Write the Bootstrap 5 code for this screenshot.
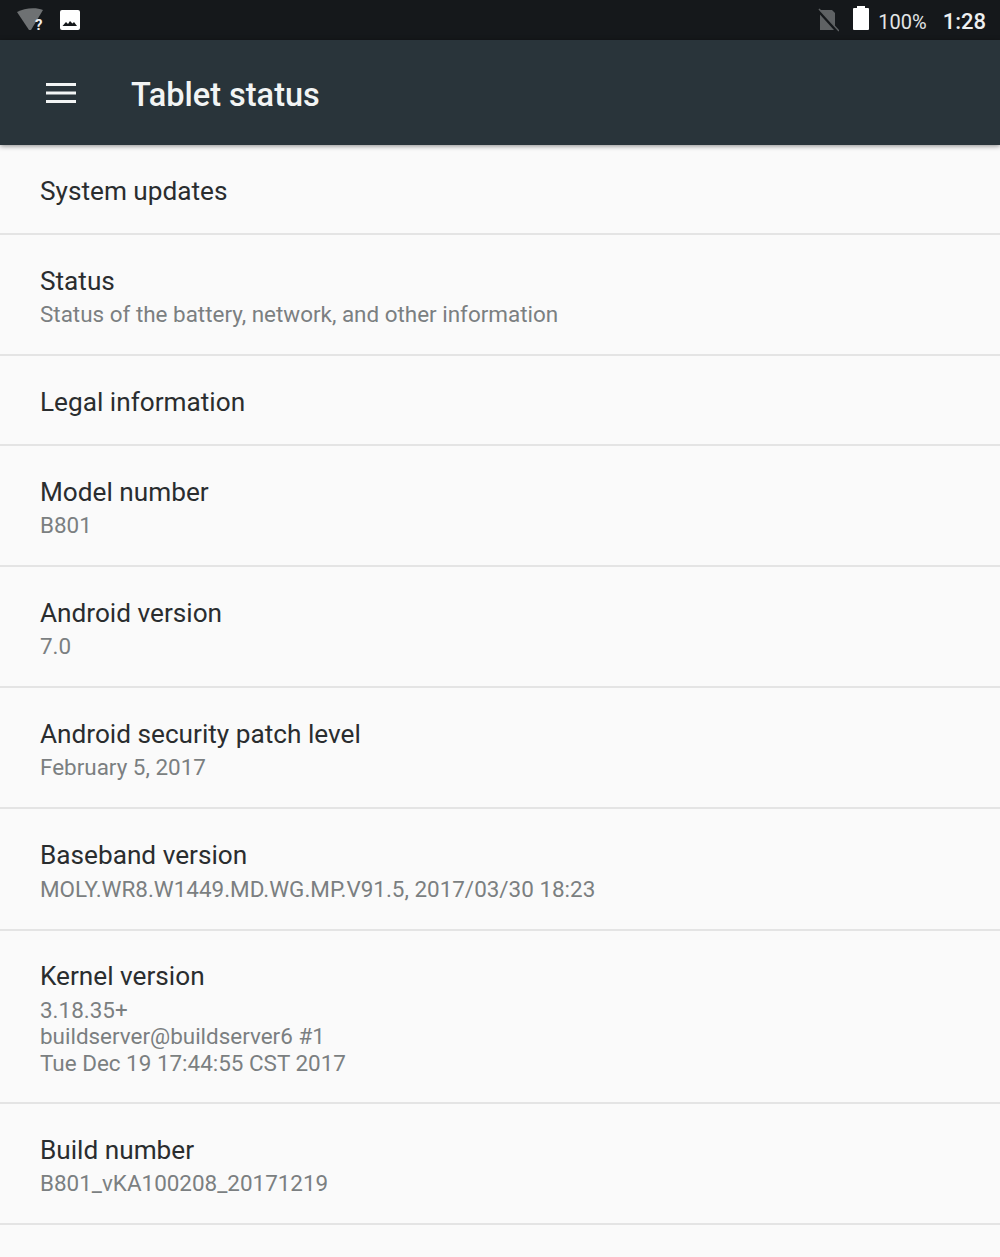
<!DOCTYPE html>
<html lang="en">
<head>
<meta charset="utf-8">
<title>Tablet status</title>
<link href="https://cdn.jsdelivr.net/npm/bootstrap@5.3.0/dist/css/bootstrap.min.css" rel="stylesheet">
<style>
html,body{height:100%}
body{background:#fafafa;font-family:Roboto,"Liberation Sans",sans-serif;overflow:hidden}
.sbar{height:40px;background:#15181b;padding:0 14px 0 16px;color:#eceeef}
.sbar svg{display:block}
.wifi{margin-right:14px}
.pct{font-size:20px;line-height:1;color:#e3e5e6;margin:3px 0 0 9px}
.clock{font-size:22px;line-height:1;font-weight:500;color:#eef0f1;margin:4px 0 0 16px}
.simoff{margin-right:14px}
.batt{margin-bottom:4px}
.abar{height:105px;background:#29343a;box-shadow:0 1px 5px rgba(0,0,0,.45);position:relative;z-index:2;padding-left:46px}
.atitle{font-size:32.5px;font-weight:500;color:#f2f4f4;margin:5px 0 0 55px;line-height:1}
.list-group-flush>.prow,.list-group-flush>.prow:last-child{border-width:0 0 2px;border-style:solid;border-color:#e4e4e4;border-radius:0;background:#fafafa;padding:3.5px 40px 0;height:121px;display:flex;flex-direction:column;justify-content:center}
.list-group-flush>.prow.one{height:90px;padding-top:4px}
.list-group-flush>.prow.wide{height:122px}
.list-group-flush>.prow.three{height:173px}
.ptitle{font-size:26.2px;line-height:32px;color:#2a2d2f}
.psub{font-size:22.45px;line-height:26.4px;color:#7b7f81;margin-top:4.5px}
</style>
</head>
<body>
<div class="sbar d-flex align-items-center">
<svg class="wifi" width="29" height="26" viewBox="0 0 29 26"><path d="M1 5C8 1 20 0 27 3L15 23h-2z" fill="#6e7173"/><text x="19" y="23" font-family="Roboto" font-size="15" font-weight="700" fill="#eee">?</text></svg>
<svg width="22" height="22" viewBox="0 0 22 22"><rect x="1" y="1" width="20" height="20" rx="2" fill="#fff"/><path d="M3.500 17l3.500-4 2 2 2-3 2.500 2.500 1.500-1.500 3 4z" fill="#15181b"/></svg>
<div class="ms-auto d-flex align-items-center">
<svg class="simoff" width="22" height="24" viewBox="0 0 22 24"><path d="M3 2h12l3 3v17H3z" fill="#5f6264"/><path d="M1 2l18 20" stroke="#15181b" stroke-width="3"/><path d="M2 1l20 22" stroke="#5f6264" stroke-width="1.500"/></svg>
<svg class="batt" width="16" height="24" viewBox="0 0 16 24"><path d="M4 0h8v2h3a1 1 0 0 1 1 1v20a1 1 0 0 1-1 1H1a1 1 0 0 1-1-1V3a1 1 0 0 1 1-1h3z" fill="#fff"/></svg>
<span class="pct">100%</span><span class="clock">1:28</span>
</div>
</div>
<div class="abar d-flex align-items-center">
<svg width="30" height="22" viewBox="0 0 30 22"><path d="M0 2.500h30M0 11h30M0 19.500h30" stroke="#f2f4f4" stroke-width="3"/></svg>
<div class="atitle">Tablet status</div>
</div>
<div class="list-group list-group-flush">
<div class="list-group-item prow one"><div class="ptitle">System updates</div></div>
<div class="list-group-item prow"><div class="ptitle">Status</div><div class="psub">Status of the battery, network, and other information</div></div>
<div class="list-group-item prow one"><div class="ptitle">Legal information</div></div>
<div class="list-group-item prow"><div class="ptitle">Model number</div><div class="psub">B801</div></div>
<div class="list-group-item prow"><div class="ptitle">Android version</div><div class="psub">7.0</div></div>
<div class="list-group-item prow"><div class="ptitle">Android security patch level</div><div class="psub">February 5, 2017</div></div>
<div class="list-group-item prow wide"><div class="ptitle">Baseband version</div><div class="psub">MOLY.WR8.W1449.MD.WG.MP.V91.5, 2017/03/30 18:23</div></div>
<div class="list-group-item prow three"><div class="ptitle">Kernel version</div><div class="psub">3.18.35+<br>buildserver@buildserver6 #1<br>Tue Dec 19 17:44:55 CST 2017</div></div>
<div class="list-group-item prow"><div class="ptitle">Build number</div><div class="psub">B801_vKA100208_20171219</div></div>
</div>
<script src="https://cdn.jsdelivr.net/npm/bootstrap@5.3.0/dist/js/bootstrap.bundle.min.js"></script>
</body>
</html>
